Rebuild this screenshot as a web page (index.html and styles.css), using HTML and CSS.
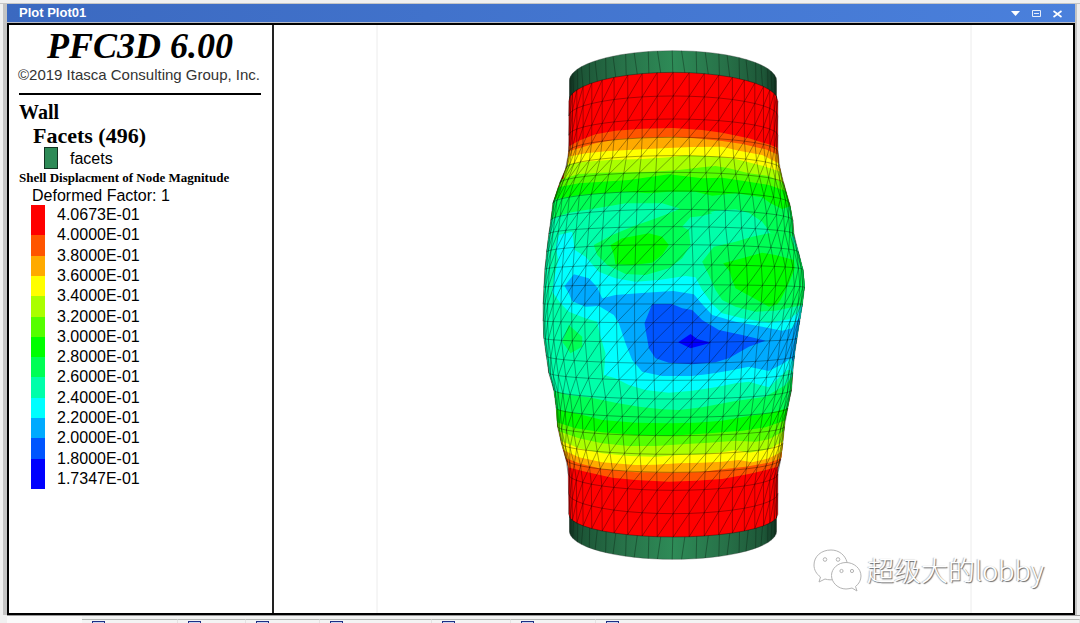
FILE: index.html
```html
<!DOCTYPE html>
<html lang="en">
<head>
<meta charset="utf-8">
<title>Plot Plot01</title>
<link rel="stylesheet" href="styles.css">
</head>
<body>
<div class="workspace">
  <section class="window">
    <header class="titlebar">
      <h1 class="titlebar-name">Plot Plot01</h1>
      <div class="titlebar-actions">
        <button type="button" aria-label="Menu"><svg width="11" height="11" viewBox="0 0 11 11"><path d="M1 3h9L5.500 8z" fill="#fff"/></svg></button>
        <button type="button" aria-label="Maximize"><svg width="11" height="11" viewBox="0 0 11 11"><path d="M1.500 2.500h8v6h-8zM3 5.500h5" fill="none" stroke="#e4ecfa"/></svg></button>
        <button type="button" aria-label="Close"><svg width="11" height="11" viewBox="0 0 11 11"><path d="M1.500 3l8 6M9.500 3l-8 6" fill="none" stroke="#fff" stroke-width="1.600"/></svg></button>
      </div>
    </header>
    <main class="plot">
      <aside class="legend">
        <h2 class="product">PFC3D 6.00</h2>
        <p class="copyright">©2019 Itasca Consulting Group, Inc.</p>
        <hr class="rule">
        <h3 class="wall">Wall</h3>
        <h4 class="facets">Facets (496)</h4>
        <div class="facet-key"><span class="swatch"></span><span>facets</span></div>
        <h3 class="shell">Shell Displacment of Node Magnitude</h3>
        <p class="factor">Deformed Factor: 1</p>
        <div class="scale">
          <div class="scale-bar">
            <i class="end c0"></i><i class="c1"></i><i class="c2"></i><i class="c3"></i><i class="c4"></i><i class="c5"></i><i class="c6"></i><i class="c7"></i><i class="c8"></i><i class="c9"></i><i class="c10"></i><i class="c11"></i><i class="end c12"></i>
          </div>
          <ul class="scale-values">
            <li>4.0673E-01</li><li>4.0000E-01</li><li>3.8000E-01</li><li>3.6000E-01</li><li>3.4000E-01</li><li>3.2000E-01</li><li>3.0000E-01</li><li>2.8000E-01</li><li>2.6000E-01</li><li>2.4000E-01</li><li>2.2000E-01</li><li>2.0000E-01</li><li>1.8000E-01</li><li>1.7347E-01</li>
          </ul>
        </div>
      </aside>
      <div class="view">
        <svg class="scene" viewBox="274 25 798 588" role="img" aria-label="Deformed shell displacement contours">
          <defs>
            <linearGradient id="cap" x1="0" x2="1" y1="0" y2="0">
              <stop offset="0" stop-color="#123322"/><stop offset=".06" stop-color="#1d5637"/>
              <stop offset=".25" stop-color="#277148"/><stop offset=".5" stop-color="#2e8b57"/>
              <stop offset=".75" stop-color="#277148"/><stop offset=".94" stop-color="#1d5637"/>
              <stop offset="1" stop-color="#123322"/>
            </linearGradient>
            <clipPath id="shell"><path id="outline"/></clipPath>
          </defs>
          <path d="M376.500 0V640M970.500 0V640" stroke="#ececec" fill="none"/>
          <g transform="translate(535 40) scale(.33333)">
            <g id="caps"></g>
            <g clip-path="url(#shell)" id="bands"></g>
            <path id="mesh" class="mesh"/>
          </g>
        </svg>
        <div class="signature">
          <svg width="50" height="44" viewBox="0 0 50 44" class="signature-logo">
            <g fill="#fff" stroke="#b4b4b4" stroke-width="1">
              <path d="M18 2C8 2 1 8.500 1 17c0 5 2.500 9 6.500 12L6 34l6-3c3 1 7 1 10 .5C35 31 35 17 34 14 32 7 26 2 18 2z"/>
              <path d="M33 14.500c-8 0-14.500 6-14.500 13S25 41 33 41c2 0 4-.5 6-1l5 3-1.500-4.500C46 36 48 32 48 28c0-7.500-7-13.500-15-13.500z"/>
              <circle cx="12" cy="11.500" r="1.800"/><circle cx="25" cy="11.500" r="1.800"/>
              <circle cx="28.500" cy="23" r="1.600"/><circle cx="39" cy="23" r="1.600"/>
            </g>
          </svg>
          <span>超级大的lobby</span>
        </div>
      </div>
    </main>
  </section>
</div>
<footer class="tabs">
  <span class="tab"></span><span class="tab"></span><span class="tab"></span><span class="tab"></span><span class="tab"></span><span class="tab"></span><span class="tab"></span>
</footer>
<script src="shell.js"></script>
</body>
</html>
```
FILE: styles.css
```css
* { box-sizing: border-box; }
body {
  margin: 0;
  height: 100vh;
  display: flex;
  flex-direction: column;
  overflow: hidden;
  background: #f0f0f0;
  color: #000;
  font-family: "Liberation Sans", Arial, sans-serif;
}
h1, h2, h3, h4, p, ul { margin: 0; padding: 0; font-weight: bold; }
.workspace {
  flex: 1;
  min-height: 0;
  display: flex;
  margin-top: 3px;
  padding: 0 5px 0 4px;
  border-top: 1px solid #c6c6c6;
  background: linear-gradient(90deg, #f0f0f0 3px, #c4c4c4 3px, #c4c4c4 calc(100% - 3px), #ededed calc(100% - 3px));
}
.window {
  flex: 1;
  display: flex;
  flex-direction: column;
  margin-left: 3px;
}
.titlebar {
  height: 19px;
  display: flex;
  align-items: center;
  justify-content: space-between;
  padding: 0 12px 0 12px;
  background: linear-gradient(90deg, #3b69c0, #4a80dc);
  border-bottom: 1px solid #b9bdc6;
}
.titlebar-name { font-size: 13px; line-height: 18px; color: #fff; }
.titlebar-actions { display: flex; gap: 10px; }
.titlebar-actions button {
  display: flex;
  padding: 0;
  border: 0;
  background: none;
}
.plot {
  flex: 1;
  min-height: 0;
  display: flex;
  background: #fff;
  border: 2px solid #000;
}
.legend {
  width: 265px;
  padding: 1px 11px 0 10px;
  border-right: 2px solid #222;
}
.product {
  font: italic bold 36px/40px "Liberation Serif", "Times New Roman", serif;
  text-align: center;
}
.copyright {
  font-weight: normal;
  font-size: 15px;
  line-height: 18px;
  color: #333;
  white-space: nowrap;
  margin-left: -1px;
}
.rule { margin: 9px 0 5px; border: 0; border-top: 2px solid #000; }
.wall { font: bold 20px/24px "Liberation Serif", "Times New Roman", serif; }
.facets { font: bold 22px/24px "Liberation Serif", "Times New Roman", serif; padding-left: 14px; }
.facet-key {
  display: flex;
  align-items: flex-end;
  gap: 12px;
  height: 21px;
  padding-left: 25px;
  font-size: 16px;
  line-height: 20px;
}
.swatch { width: 14px; height: 22px; background: #2e8b57; border: 1px solid #123322; }
.shell { font: bold 13px/18px "Liberation Serif", "Times New Roman", serif; white-space: nowrap; }
.factor { font-weight: normal; font-size: 16px; line-height: 18px; padding-left: 13px; }
.scale { display: flex; gap: 12px; height: 284px; padding-left: 12px; }
.scale-bar { width: 14px; display: flex; flex-direction: column; }
.scale-bar i { flex: 2; }
.scale-bar .end { flex: 3; }
.scale-values {
  display: grid;
  grid-auto-rows: 1fr;
  align-items: center;
  list-style: none;
  font-weight: normal;
  font-size: 16px;
  line-height: 20px;
}
.c0 { background: #ff0000; } .c1 { background: #ff5500; } .c2 { background: #ffaa00; }
.c3 { background: #ffff00; } .c4 { background: #aaff00; } .c5 { background: #55ff00; }
.c6 { background: #00ff00; } .c7 { background: #00ff55; } .c8 { background: #00ffaa; }
.c9 { background: #00ffff; } .c10 { background: #00aaff; } .c11 { background: #0055ff; }
.c12 { background: #0000ff; }
.view { flex: 1; min-width: 0; position: relative; }
.scene { display: block; width: 100%; height: 100%; }
.mesh { fill: none; stroke: #000; stroke-opacity: .5; stroke-width: 2; }
.cap-line { fill: none; stroke: #0b2416; stroke-opacity: .65; stroke-width: 2; }
.signature {
  position: absolute;
  right: 29px;
  bottom: 21px;
  display: flex;
  align-items: center;
  gap: 4px;
  font: 300 27px/40px "Noto Sans CJK SC", sans-serif;
  color: #fff;
  text-shadow: 1px 1px 1px #666, -1px 0 1px #bbb;
}
.tabs {
  height: 8px;
  margin-left: 7px;
  padding-left: 75px;
  display: grid;
  grid-template-columns: 96px 68px 74px 112px 79px 85px 1fr;
  background: linear-gradient(90deg, #fafafa 75px, #f3f4f4 75px);
  border-top: 1px solid #999;
}
.tab {
  margin-top: 3px;
  padding: 1px 0 0 10px;
  border-top: 1px solid #b5b8b5;
  border-right: 1px solid #e2e2e2;
  overflow: hidden;
}
.tab::before {
  content: "";
  display: block;
  width: 11px;
  height: 11px;
  border: 1px solid #1d2f86;
  background: #c9d6f0;
}
```
FILE: shell.js
```js
const NS = 'http://www.w3.org/2000/svg';
const CX = 413;

// Ring heights: [centre y, silhouette y]
const rings = [
  [97, 183], [168, 228], [237, 286], [292, 335], [347, 385], [397, 430],
  [453, 490], [508, 541], [560, 582], [614, 636], [674, 688], [734, 742],
  [792, 792], [848, 843], [907, 895], [970, 948], [1021, 998], [1077, 1050],
  [1132, 1104], [1187, 1160], [1243, 1210], [1297, 1258], [1351, 1302],
  [1421, 1360], [1491, 1423]
];
// Silhouette profiles: [y, x]
const left = [[183, 100], [330, 100], [375, 95], [440, 68], [490, 52], [540, 46],
  [610, 36], [690, 28], [780, 23], [880, 23], [930, 30], [1000, 40], [1045, 54],
  [1100, 62], [1155, 65], [1220, 80], [1280, 98], [1423, 100]];
const right = [[183, 727], [330, 727], [370, 730], [420, 742], [500, 765], [540, 772],
  [590, 776], [640, 790], [690, 803], [735, 808], [800, 800], [860, 790],
  [930, 779], [980, 773], [1045, 769], [1090, 760], [1140, 749], [1210, 742],
  [1250, 738], [1285, 727], [1423, 727]];
const columns = [0, .153, .297, .435, .566, .68, .78, .863, .923, .965, .987, 1];
const spread = columns.slice(1).reverse().map(s => -s).concat(columns);

function profile(points, y) {
  for (let i = 1; i < points.length; i++) {
    const [y0, x0] = points[i - 1], [y1, x1] = points[i];
    if (y <= y1) return x0 + (x1 - x0) * Math.max(0, (y - y0) / (y1 - y0));
  }
  return points[points.length - 1][1];
}
function node(ring, s) {
  const [yc, ye] = ring;
  const edge = profile(s < 0 ? left : right, ye);
  return [CX + Math.abs(s) * (edge - CX), yc + (ye - yc) * (1 - Math.sqrt(1 - s * s))];
}
const line = pts => 'M' + pts.map(p => p[0].toFixed(1) + ' ' + p[1].toFixed(1)).join('L');

function add(parent, d, attrs) {
  const el = document.createElementNS(NS, 'path');
  el.setAttribute('d', d);
  for (const k in attrs) el.setAttribute(k, attrs[k]);
  document.getElementById(parent).appendChild(el);
}

// Mesh: rings, meridians and one diagonal per cell
const grid = rings.map(r => spread.map(s => node(r, s)));
let mesh = grid.map(line).join('');
spread.forEach((s, j) => { mesh += line(grid.map(r => r[j])); });
for (let i = 1; i < grid.length; i++)
  for (let j = 1; j < spread.length; j++)
    mesh += line([grid[i][j - 1], grid[i - 1][j]]);
document.getElementById('mesh').setAttribute('d', mesh);

const flip = pts => pts.map(([y, x]) => [x, y]);
document.getElementById('outline').setAttribute('d',
  line([...grid[0], ...flip(right), ...grid[24].slice().reverse(), ...flip(left).reverse()]) + 'Z');

// End caps
add('caps', 'M102 190V122A310.5 90 0 0 1 723 122V190Z', { fill: 'url(#cap)', stroke: '#333' });
add('caps', 'M102 1400V1474A310.5 84 0 0 0 723 1474V1400Z', { fill: 'url(#cap)', stroke: '#333' });
let capLines = '';
for (let k = -13; k <= 13; k++) {
  const a = k * 6.7 * Math.PI / 180, c = Math.cos(a), x = 412 + 310 * Math.sin(a);
  const end = Math.max(103, x - (k % 2 ? 10 : 2) * c);
  const depth = Math.sqrt(Math.max(0, 1 - ((end - 412.5) / 310.5) ** 2));
  capLines += line([[end, 122 - 90 * depth], [x, 185 - 86 * c]]);
  capLines += line([[x, 1420 + 70 * c], [end, 1474 + 84 * depth]]);
}
add('caps', capLines, { class: 'cap-line' });

// Contour bands, outermost first: upper boundary, lower boundary
const bands = [
  ['#ff5500',
    [[90, 325], [130, 302], [180, 283], [240, 272], [320, 266], [413, 264], [500, 270], [560, 278], [640, 295], [700, 313], [735, 327]],
    [[735, 1278], [700, 1288], [640, 1302], [560, 1317], [480, 1322], [400, 1325], [300, 1320], [230, 1313], [150, 1295], [90, 1280]]],
  ['#ffaa00',
    [[90, 337], [130, 325], [180, 310], [250, 297], [320, 293], [413, 290], [480, 295], [560, 303], [620, 312], [690, 328], [735, 347]],
    [[745, 1252], [700, 1268], [630, 1280], [560, 1288], [490, 1297], [400, 1298], [300, 1297], [200, 1287], [130, 1270], [85, 1252]]],
  ['#ffff00',
    [[90, 352], [150, 340], [220, 333], [320, 328], [413, 323], [470, 321], [560, 320], [610, 332], [680, 345], [738, 374]],
    [[745, 1232], [700, 1255], [650, 1267], [610, 1260], [560, 1265], [500, 1268], [430, 1270], [360, 1274], [300, 1275], [200, 1267], [130, 1252], [75, 1226]]],
  ['#aaff00',
    [[85, 374], [150, 365], [220, 360], [320, 357], [400, 352], [450, 346], [550, 350], [600, 357], [680, 377], [745, 398]],
    [[750, 1200], [700, 1228], [640, 1238], [600, 1230], [560, 1237], [500, 1243], [430, 1245], [360, 1250], [280, 1248], [200, 1240], [130, 1225], [70, 1200]]],
  ['#55ff00',
    [[70, 420], [130, 402], [200, 398], [280, 397], [350, 395], [430, 390], [500, 382], [540, 378], [580, 385], [640, 400], [700, 408], [755, 434]],
    [[755, 1168], [700, 1198], [660, 1205], [600, 1202], [520, 1208], [440, 1213], [360, 1218], [280, 1218], [200, 1210], [130, 1195], [60, 1170]]],
  ['#00ff00',
    [[55, 444], [130, 430], [200, 425], [280, 420], [400, 403], [500, 415], [560, 413], [640, 425], [700, 435], [770, 460]],
    [[760, 1138], [690, 1162], [620, 1172], [560, 1177], [480, 1183], [400, 1187], [300, 1185], [200, 1177], [120, 1165], [55, 1144]]],
  ['#00ff55',
    [[45, 480], [130, 465], [200, 460], [270, 455], [340, 460], [400, 455], [480, 455], [530, 467], [600, 460], [680, 472], [705, 490], [740, 507], [775, 495], [830, 495]],
    [[830, 1095], [755, 1105], [700, 1120], [640, 1128], [560, 1142], [480, 1148], [400, 1150], [300, 1148], [200, 1140], [130, 1122], [50, 1105]]],
  ['#00ffaa',
    [[10, 560], [60, 532], [100, 518], [150, 510], [210, 500], [270, 490], [380, 490], [440, 508], [500, 522], [540, 512], [600, 508], [640, 518], [680, 545], [706, 580], [765, 588], [830, 600]],
    [[830, 970], [768, 1012], [750, 1035], [690, 1070], [600, 1083], [500, 1102], [430, 1110], [380, 1108], [310, 1100], [240, 1088], [160, 1072], [100, 1065], [10, 1040]]],
  // patches around and inside the two warm spots
  ['#00ff55', [[175, 615], [230, 585], [290, 560], [370, 532], [420, 512], [450, 495], [500, 505], [530, 520], [500, 528], [465, 532], [440, 560], [460, 570], [465, 615], [440, 655], [400, 685], [330, 705], [270, 702], [215, 675], [185, 645]], []],
  ['#00ff55', [[500, 665], [535, 620], [600, 605], [650, 590], [700, 580], [765, 580], [774, 610], [820, 700], [820, 792], [790, 797], [720, 812], [660, 815], [600, 800], [560, 780], [540, 750], [520, 705]], []],
  ['#00ff00', [[225, 615], [260, 595], [340, 580], [380, 590], [400, 615], [380, 645], [350, 668], [290, 675], [240, 673], [235, 645]], []],
  ['#00ff00', [[563, 670], [620, 655], [680, 638], [720, 645], [775, 660], [778, 685], [760, 730], [735, 780], [725, 793], [700, 800], [665, 780], [600, 745], [590, 720], [583, 695]], []],
  ['#00ff55', [[80, 905], [100, 855], [140, 890], [140, 920], [105, 940]], []],
  // cool region
  ['#00ffff',
    [[70, 585], [110, 575], [118, 630], [150, 650], [190, 695], [240, 715], [300, 725], [370, 720], [450, 708], [480, 712], [500, 750], [530, 792], [560, 820], [620, 835], [700, 848], [760, 838], [785, 820], [810, 780]],
    [[780, 1000], [765, 990], [755, 990], [700, 1042], [640, 1025], [600, 1030], [540, 1042], [470, 1052], [400, 1058], [330, 1050], [280, 1035], [240, 1015], [205, 1005], [210, 940], [195, 890], [185, 845], [150, 835], [100, 815], [75, 790], [50, 755], [55, 720], [68, 660], [60, 620]]],
  ['#00aaff',
    [[87, 738], [115, 703], [160, 715], [185, 742], [200, 775], [240, 765], [330, 758], [413, 753], [475, 763], [495, 787], [530, 825], [600, 845], [680, 860], [740, 872], [770, 865], [785, 840], [810, 820]],
    [[780, 970], [765, 955], [745, 970], [700, 993], [640, 980], [580, 992], [520, 1002], [470, 1008], [380, 1008], [320, 995], [290, 960], [270, 910], [250, 850], [235, 825], [190, 798], [150, 800], [110, 784], [100, 760]]],
  ['#0055ff', [[350, 792], [410, 792], [440, 805], [470, 810], [500, 840], [550, 870], [620, 885], [690, 902], [640, 920], [580, 955], [540, 967], [470, 973], [400, 968], [360, 955], [340, 925], [327, 850]], []],
  ['#0000ff', [[428, 907], [465, 882], [485, 897], [527, 908], [465, 925]], []]
];
add('bands', 'M0 0H840V1580H0Z', { fill: '#ff0000' });
for (const [fill, upper, lower] of bands) add('bands', line([...upper, ...lower]) + 'Z', { fill });
```
